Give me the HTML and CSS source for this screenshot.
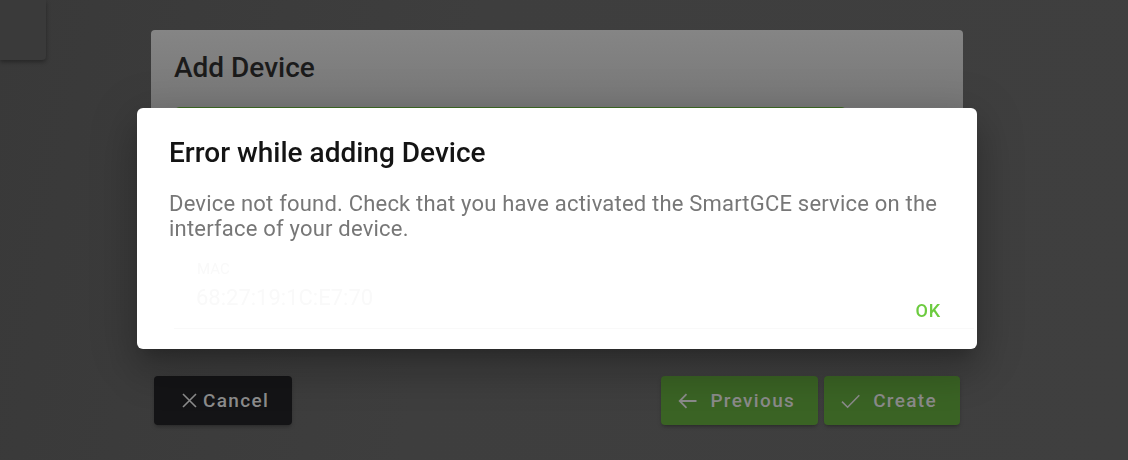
FILE: index.html
```html
<!DOCTYPE html>
<html lang="en">
<head>
  <meta charset="UTF-8">
  <title>Add Device</title>
  <link rel="stylesheet" href="styles.css">
</head>
<body>
  <div class="corner-card"></div>

  <div class="wizard">
    <div class="wizard-card">
      <h2 class="wizard-title">Add Device</h2>
      <div class="device-pick"></div>
    </div>

    <div class="wizard-actions">
      <button class="btn btn-dark btn-cancel">
        <svg width="15" height="15" viewBox="0 0 15 15"><path d="M1 1L14 14M14 1L1 14" stroke="currentColor" stroke-width="1.6" fill="none"/></svg>
        <span>Cancel</span>
      </button>
      <div class="actions-right">
        <button class="btn btn-green">
          <svg width="19" height="16" viewBox="0 0 19 16"><path d="M18.5 8H2M8.5 1.2L1.7 8l6.8 6.8" stroke="currentColor" stroke-width="1.8" fill="none"/></svg>
          <span>Previous</span>
        </button>
        <button class="btn btn-green">
          <svg width="19" height="16" viewBox="0 0 19 16"><path d="M1 8.6l5.6 5.6L18.3 2.2" stroke="currentColor" stroke-width="1.6" fill="none"/></svg>
          <span>Create</span>
        </button>
      </div>
    </div>
  </div>

  <div class="dialog">
    <div class="ghost-field">
      <div class="ghost-label">MAC</div>
      <div class="ghost-value">68:27:19:1C:E7:70</div>
    </div>
    <h3 class="dialog-title">Error while adding Device</h3>
    <p class="dialog-text">Device not found. Check that you have activated the SmartGCE service on the interface of your device.</p>
    <div class="dialog-actions">
      <button class="btn-text">OK</button>
    </div>
  </div>
</body>
</html>
```

FILE: styles.css
```css
html, body { height: 100%; }
body {
  margin: 0;
  font-family: Roboto, "Noto Sans", Arial, sans-serif;
  background: linear-gradient(100deg, #393939 0%, #3e3e3e 40%, #3f3f3f 100%);
  overflow: hidden;
}

.corner-card {
  position: fixed;
  top: 0;
  left: 0;
  width: 46px;
  height: 60px;
  background: #3a3a3a;
  border-bottom-right-radius: 4px;
  box-shadow: 0 2px 4px rgba(0,0,0,0.35);
}

.wizard { width: 812px; margin: 30px 0 0 151px; }

.wizard-card {
  height: 300px;
  padding: 20px 23px 0;
  box-sizing: border-box;
  border-radius: 4px;
  background: linear-gradient(#858585 0, #777 80px, #777 100%);
}
.wizard-title {
  margin: 0;
  font-size: 28px;
  line-height: 36px;
  font-weight: 500;
  color: #1b1b1b;
}
.device-pick {
  margin: 21px 0 0 1px;
  width: 671px;
  height: 80px;
  border: 1px solid #3d6a22;
  border-radius: 4px;
  box-sizing: border-box;
}

.wizard-actions {
  display: flex;
  justify-content: space-between;
  padding: 0 3px;
  margin-top: 46px;
}
.actions-right { display: flex; gap: 6px; }

.btn {
  display: flex;
  align-items: center;
  height: 49px;
  border: none;
  border-radius: 4px;
  font-family: inherit;
  font-size: 19px;
  font-weight: 500;
  letter-spacing: 0.07em;
  color: #8a8a8a;
  padding: 0 23px 0 17px;
  gap: 13px;
  box-shadow: 0 3px 3px -2px rgba(0,0,0,0.2), 0 2px 4px rgba(0,0,0,0.14);
}
.btn-dark { background: #141416; color: #8c8c8c; }
.btn-cancel { padding-left: 28px; gap: 6px; }
.btn-green { background: #3a6324; }

.dialog {
  position: fixed;
  top: 108px;
  left: 137px;
  width: 840px;
  box-sizing: border-box;
  padding: 30px 32px 21px;
  background: #fff;
  border-radius: 6px;
  box-shadow: 0 11px 15px -7px rgba(0,0,0,0.2), 0 24px 38px 3px rgba(0,0,0,0.14), 0 9px 46px 8px rgba(0,0,0,0.12);
}
.dialog-title {
  margin: 0 0 23px;
  font-size: 28px;
  line-height: 30px;
  font-weight: 500;
  color: #141414;
}
.dialog-text {
  margin: 0;
  font-size: 22px;
  line-height: 25px;
  letter-spacing: 0.2px;
  color: #777;
}
.dialog-actions {
  display: flex;
  justify-content: flex-end;
  margin-top: 51px;
  margin-right: -12px;
}
.btn-text {
  height: 36px;
  padding: 0 16px;
  border: none;
  background: none;
  font-family: inherit;
  font-size: 18px;
  font-weight: 500;
  letter-spacing: 0.05em;
  color: #6ccb3f;
}

.ghost-field {
  position: absolute;
  top: 150px;
  left: 37px;
  width: 800px;
  height: 70px;
  border-bottom: 1px solid #f9f9f9;
  color: #f9f9f9;
  pointer-events: none;
}
.ghost-label { padding-left: 23px; font-size: 15px; line-height: 16px; margin-top: 3px; }
.ghost-value { padding-left: 22px; font-size: 22px; line-height: 30px; margin-top: 6px; }
```
